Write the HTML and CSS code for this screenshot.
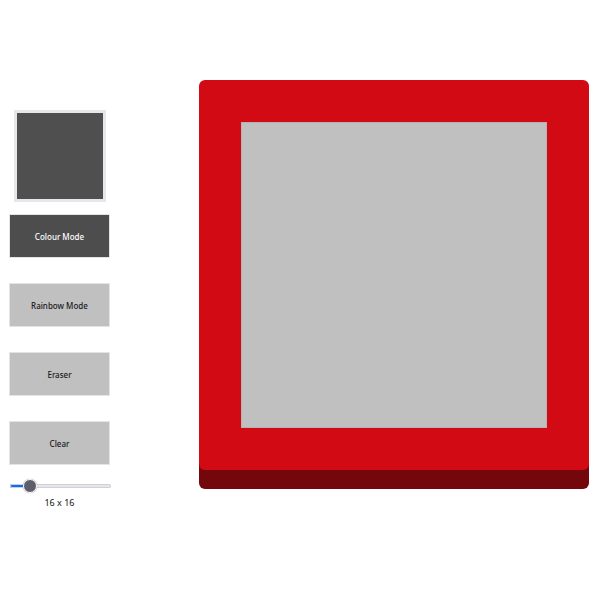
FILE: index.html
```html
<html>
  <head>
    <title>Etch A Sketch</title>
    <link rel="stylesheet" href="styles.css">
  </head>
  <body>
    <div class="app">
      <!-- Controls on the left -->
      <div class="controls">
        <div class="swatch"></div>
        <button class="btn active">Colour Mode</button>
        <button class="btn">Rainbow Mode</button>
        <button class="btn">Eraser</button>
        <button class="btn">Clear</button>
        <input type="range" class="slider" min="1" max="100" value="16" style="--fill: 18%">
        <div class="size-label">16 x 16</div>
      </div>

      <!-- The sketch board -->
      <div class="board">
        <div class="grid"></div>
      </div>
    </div>
  </body>
</html>
```

FILE: styles.css
```css
body {
  margin: 0;
  background-color: #ffffff;
  font-family: "Noto Sans", "Open Sans", sans-serif;
}
.app {
  display: flex;
  align-items: flex-start;
  padding: 80px 0 0 9px;
}
.controls {
  width: 101px;
  margin-top: 30px;
  display: flex;
  flex-direction: column;
  align-items: center;
}
.swatch {
  width: 86px;
  height: 86px;
  border: 3px solid #e7e7eb;
  background-color: #4f4f4f;
  margin-bottom: 12px;
}
.btn {
  width: 101px;
  height: 44px;
  margin-bottom: 25px;
  border: 1px solid #e4e4e4;
  background-color: #c0c0c0;
  color: #1a1a1a;
  font-family: "Noto Sans", "Open Sans", sans-serif;
  font-size: 8px;
  font-weight: 500;
  cursor: pointer;
}
.btn.active {
  background-color: #4d4d4d;
  color: #ffffff;
}
.slider {
  -webkit-appearance: none;
  width: 101px;
  height: 14px;
  margin: -11px 0 0 1px;
  background: transparent;
}
.slider::-webkit-slider-runnable-track {
  height: 4px;
  border-radius: 2px;
  background: linear-gradient(to right, #0a6cff var(--fill), #e6e6ea var(--fill));
  box-shadow: inset 0 0 0 1px #d0d0d6;
}
.slider::-webkit-slider-thumb {
  -webkit-appearance: none;
  width: 14px;
  height: 14px;
  margin-top: -5px;
  border-radius: 50%;
  background: #5c5e6b;
  border: 1.5px solid #ffffff;
  box-shadow: 0 0 1px #888888;
}
.size-label {
  margin-top: 3px;
  font-size: 9px;
  color: #111111;
}
.board {
  margin-left: 89px;
  width: 390px;
  height: 390px;
  padding: 42px;
  box-sizing: border-box;
  background-color: #d10a14;
  border-radius: 6px;
  box-shadow: 0 19px 0 #74070c;
}
.grid {
  width: 306px;
  height: 306px;
  box-sizing: border-box;
  background-color: #c0c0c0;
  border: 1px solid #b3b3b3;
}
```
